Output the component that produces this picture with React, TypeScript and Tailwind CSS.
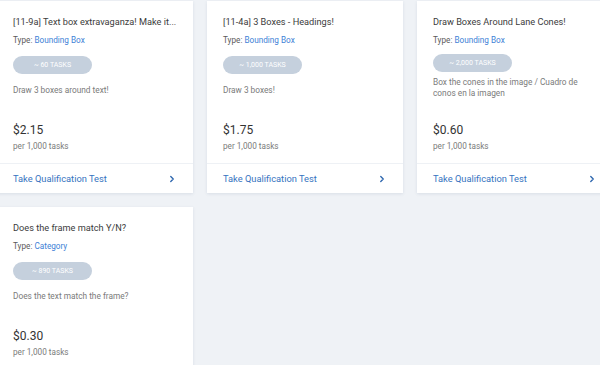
import React from "react";
import { ChevronRight } from "lucide-react";

type Task = {
  title: string;
  type: string;
  tasks: string;
  desc: string;
  price: string;
  tight?: boolean;
};

const tasks: Task[] = [
  { title: "[11-9a] Text box extravaganza! Make it...", type: "Bounding Box", tasks: "~ 60 TASKS", desc: "Draw 3 boxes around text!", price: "$2.15" },
  { title: "[11-4a] 3 Boxes - Headings!", type: "Bounding Box", tasks: "~ 1,000 TASKS", desc: "Draw 3 boxes!", price: "$1.75" },
  { title: "Draw Boxes Around Lane Cones!", type: "Bounding Box", tasks: "~ 2,000 TASKS", desc: "Box the cones in the image / Cuadro de conos en la imagen", price: "$0.60", tight: true },
  { title: "Does the frame match Y/N?", type: "Category", tasks: "~ 890 TASKS", desc: "Does the text match the frame?", price: "$0.30" },
];

function Card({ t }: { t: Task }) {
  return (
    <div className="flex h-[192px] w-[196px] flex-col bg-white shadow-[0_1px_3px_rgba(60,80,120,0.12)]">
      <div className="flex flex-1 flex-col px-4 pt-[14px]">
        <div className="whitespace-nowrap text-[9.2px] leading-[14px] text-[#3c3c3c]">{t.title}</div>
        <div className="mt-[5px] text-[8.2px] leading-[12px] text-[#5a5a5a]">
          Type: <span className="text-[#3d7fd6]">{t.type}</span>
        </div>
        <div className={`${t.tight ? "mt-[8px]" : "mt-[10px]"} flex h-[18px] w-[79px] items-center justify-center rounded-full bg-[#c5d0dd] text-[7px] uppercase text-white`}>
          {t.tasks}
        </div>
        <div className={`${t.tight ? "mt-[5px]" : "mt-[11px]"} text-[8.3px] leading-[11px] text-[#7a7a7a]`}>{t.desc}</div>
        <div className="flex-1" />
        <div className="text-[12px] leading-[16px] text-[#333]">{t.price}</div>
        <div className="mt-[2px] pb-[11px] text-[8.2px] leading-[12px] text-[#7a7a7a]">per 1,000 tasks</div>
      </div>
      <div className="flex h-[30px] shrink-0 items-center justify-between border-t border-[#eef1f5] pl-4 pr-[16px]">
        <span className="text-[9.3px] text-[#3573c0]">Take Qualification Test</span>
        <ChevronRight size={10} strokeWidth={3.2} className="text-[#2d66ae]" />
      </div>
    </div>
  );
}

export default function App() {
  return (
    <div
      className="h-[365px] w-[600px] overflow-hidden bg-[#eff2f6]"
      style={{ fontFamily: "Roboto, 'Liberation Sans', sans-serif" }}
    >
      <div className="ml-[-3px] grid grid-cols-[196px_196px_196px] gap-x-[14px] gap-y-[14px] pt-px">
        {tasks.map((t, i) => (
          <Card key={i} t={t} />
        ))}
      </div>
    </div>
  );
}
